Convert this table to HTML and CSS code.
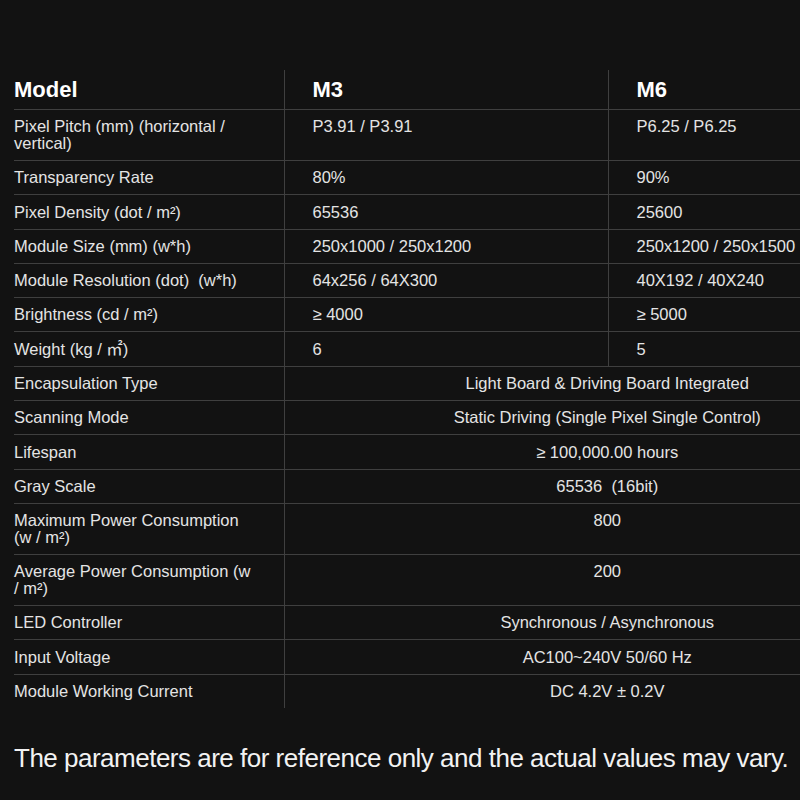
FILE: index.html
```html
<!DOCTYPE html>
<html lang="en">
<head>
<meta charset="utf-8">
<title>Specifications</title>
<link rel="stylesheet" href="styles.css">
</head>
<body>
<main class="page">
  <table class="spec">
    <colgroup>
      <col class="c1"><col class="c2"><col class="c3">
    </colgroup>
    <thead>
      <tr>
        <th class="label">Model</th>
        <th class="val">M3</th>
        <th class="val">M6</th>
      </tr>
    </thead>
    <tbody>
      <tr><td class="label">Pixel Pitch (mm) (horizontal / vertical)</td><td class="val">P3.91 / P3.91</td><td class="val">P6.25 / P6.25</td></tr>
      <tr><td class="label">Transparency Rate</td><td class="val">80%</td><td class="val">90%</td></tr>
      <tr><td class="label">Pixel Density (dot / m²)</td><td class="val">65536</td><td class="val">25600</td></tr>
      <tr><td class="label">Module Size (mm) (w*h)</td><td class="val">250x1000 / 250x1200</td><td class="val">250x1200 / 250x1500</td></tr>
      <tr><td class="label">Module Resolution (dot)&nbsp; (w*h)</td><td class="val">64x256 / 64X300</td><td class="val">40X192 / 40X240</td></tr>
      <tr><td class="label">Brightness (cd / m²)</td><td class="val">≥ 4000</td><td class="val">≥ 5000</td></tr>
      <tr><td class="label">Weight (kg / <span class="sqm">㎡</span>)</td><td class="val">6</td><td class="val">5</td></tr>
      <tr><td class="label">Encapsulation Type</td><td class="val merged" colspan="2">Light Board &amp; Driving Board Integrated</td></tr>
      <tr><td class="label">Scanning Mode</td><td class="val merged" colspan="2">Static Driving (Single Pixel Single Control)</td></tr>
      <tr><td class="label">Lifespan</td><td class="val merged" colspan="2">≥ 100,000.00 hours</td></tr>
      <tr><td class="label">Gray Scale</td><td class="val merged" colspan="2">65536&nbsp; (16bit)</td></tr>
      <tr><td class="label">Maximum Power Consumption (w / m²)</td><td class="val merged" colspan="2">800</td></tr>
      <tr><td class="label">Average Power Consumption (w / m²)</td><td class="val merged" colspan="2">200</td></tr>
      <tr><td class="label">LED Controller</td><td class="val merged" colspan="2">Synchronous / Asynchronous</td></tr>
      <tr><td class="label">Input Voltage</td><td class="val merged" colspan="2">AC100~240V 50/60 Hz</td></tr>
      <tr><td class="label">Module Working Current</td><td class="val merged" colspan="2">DC 4.2V ± 0.2V</td></tr>
    </tbody>
  </table>
  <p class="note">The parameters are for reference only and the actual values may vary.</p>
</main>
</body>
</html>
```

FILE: styles.css
```css
html, body {
  margin: 0;
  padding: 0;
  background: #121212;
  overflow: hidden;
}

.page {
  width: 930px;
  padding: 70px 0 0 14px;
  font-family: "Liberation Sans", Arial, "Noto Sans CJK SC", sans-serif;
  color: #e4e4e4;
}

.spec {
  width: 916px;
  table-layout: fixed;
  border-collapse: collapse;
}

.c1 { width: 270px; }
.c2 { width: 324px; }
.c3 { width: 322px; }

.spec th {
  font-size: 22px;
  line-height: 22px;
  font-weight: bold;
  color: #ffffff;
  text-align: left;
  padding: 8.5px 28px 8.5px 0;
  border-bottom: 1px solid #3f3f3f;
  vertical-align: top;
}

.spec td {
  font-size: 16.5px;
  line-height: 16.7px;
  text-align: left;
  vertical-align: top;
  padding: 8.3px 28px 8.3px 0;
  border-bottom: 1px solid #3f3f3f;
}

.spec tbody tr:last-child td {
  border-bottom: none;
}

.spec .val {
  padding-left: 28px;
  border-left: 1px solid #3f3f3f;
}

.spec .merged {
  text-align: center;
  padding-left: 0;
  padding-right: 0;
}

.sqm {
  font-family: "Noto Sans CJK SC", sans-serif;
  line-height: 0;
}

.note {
  margin: 35px 0 0 0;
  font-size: 26px;
  line-height: 30px;
  letter-spacing: -0.5px;
  color: #f2f2f2;
  white-space: nowrap;
}
```
